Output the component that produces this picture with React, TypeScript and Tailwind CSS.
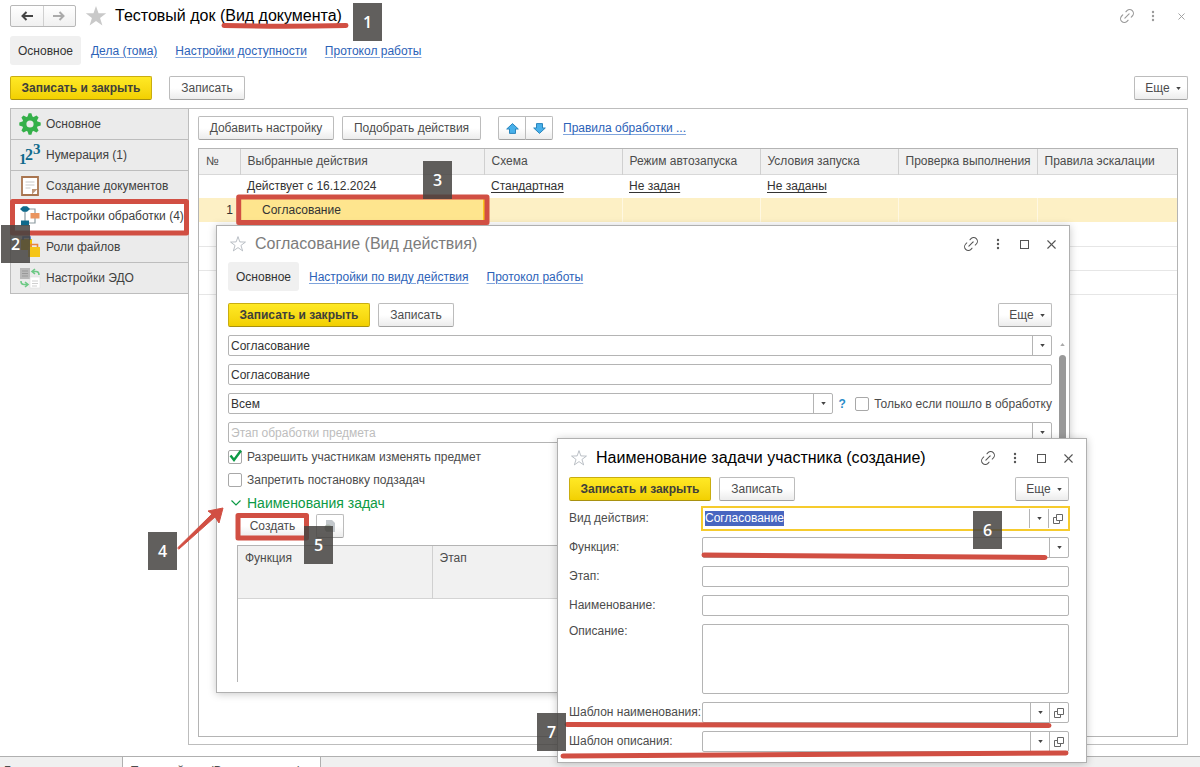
import { useEffect, useRef, type ReactNode } from 'react';
import { Link2, X } from 'lucide-react';
import clsx from 'clsx';

const columns = [
  { title: '№', width: 'w-[41px]' },
  { title: 'Выбранные действия', width: 'w-[244px]' },
  { title: 'Схема', width: 'w-[138px]' },
  { title: 'Режим автозапуска', width: 'w-[138px]' },
  { title: 'Условия запуска', width: 'w-[138px]' },
  { title: 'Проверка выполнения', width: 'w-[139px]' },
  { title: 'Правила эскалации', width: '' },
];

const badges = [
  { n: 1, place: 'left-[353px] top-[3px]' },
  { n: 2, place: 'left-[1px] top-[225px]' },
  { n: 3, place: 'left-[423px] top-[161px]' },
  { n: 4, place: 'left-[148px] top-[532px]' },
  { n: 5, place: 'left-[304px] top-[526px]' },
  { n: 6, place: 'left-[973px] top-[511px]' },
  { n: 7, place: 'left-[537px] top-[713px]' },
];

function Star({ filled, className }: { filled?: boolean; className?: string }) {
  return (
    <svg viewBox="0 0 20 20" className={className} fill={filled ? '#c9c9c9' : 'none'} stroke={filled ? 'none' : '#a9b0b8'}>
      <path d="M10 .8 12.3 7.4 19.3 7.6 13.7 11.8 15.8 18.6 10 14.5 4.2 18.6 6.3 11.8 .7 7.6 7.7 7.4Z" />
    </svg>
  );
}

function Arrow({ right }: { right?: boolean }) {
  return (
    <svg viewBox="0 0 12 10" className={clsx('h-[10px] w-3', right && 'rotate-180')} fill="none" stroke="currentColor" strokeWidth="2">
      <path d="M1 5h11M5.500 1 1.500 5l4 4" />
    </svg>
  );
}

function Dots() {
  return (
    <svg viewBox="0 0 4 12" className="h-3 w-1" fill="currentColor">
      <circle cx="2" cy="2" r="1.2" />
      <circle cx="2" cy="6" r="1.2" />
      <circle cx="2" cy="10" r="1.2" />
    </svg>
  );
}

function Caret() {
  return (
    <svg viewBox="0 0 6 4" className="h-[3px] w-[5px] shrink-0" fill="#444">
      <path d="M0 0h6L3 4Z" />
    </svg>
  );
}

function GearIcon() {
  return (
    <svg viewBox="0 0 22 22" className="size-[22px] shrink-0">
      <g fill="#35b04a">
        {[0, 45, 90, 135].map((a) => (
          <path key={a} d="M9.600 .3h2.800l1 3.200v15l-1 3.200H9.600l-1-3.200v-15Z" transform={`rotate(${a} 11 11)`} />
        ))}
        <circle cx="11" cy="11" r="7.8" />
      </g>
      <circle cx="11" cy="11" r="3.6" fill="#ebebeb" />
    </svg>
  );
}

function NumbersIcon() {
  return (
    <svg viewBox="0 0 22 22" className="size-[22px] shrink-0 overflow-visible font-['Liberation_Serif',serif] font-bold" fill="#0f6a8c">
      <text x="0" y="20" fontSize="15">1</text>
      <text x="6" y="16" fontSize="16">2</text>
      <text x="14" y="10" fontSize="15">3</text>
    </svg>
  );
}

function PageIcon() {
  return (
    <svg viewBox="0 0 22 22" className="size-[22px] shrink-0">
      <path d="M3 2h16v18H3Z" fill="#fff" stroke="#a9754f" strokeWidth="1.8" />
      <path d="M13 19.500V14h5.500Z" fill="#a9754f" opacity=".75" />
      <path d="M6.500 7h9M6.500 10h9M6.500 13h5" stroke="#c9c9c9" strokeWidth="1.2" />
    </svg>
  );
}

function SchemeIcon() {
  return (
    <svg viewBox="0 0 22 22" className="size-[22px] shrink-0">
      <path d="M6 6v11M6 4h10v5M16 13v5H8" fill="none" stroke="#8b9aa0" strokeWidth="1.200" />
      <path d="M1 4l3-2.800h4L11 4 8 6.800H4Z" fill="#0f6a8c" />
      <path d="M2 15.500h8v5H2Z" fill="#0f6a8c" />
      <path d="M11.500 8h9v5.500h-9Z" fill="#ea9560" />
    </svg>
  );
}

function FolderIcon() {
  return (
    <svg viewBox="0 0 22 22" className="size-[22px] shrink-0">
      <path d="M2 3h11v11H2Z" fill="#f2c200" />
      <path d="M4 4V1h7v3" fill="none" stroke="#3a64b4" strokeWidth="1.500" />
      <path d="M9 11h12v10H9Z" fill="#f5c518" />
      <path d="M12 11V8.500h6.500V11" fill="none" stroke="#e8853f" strokeWidth="1.600" />
    </svg>
  );
}

function ExchangeIcon() {
  return (
    <svg viewBox="0 0 22 22" className="size-[22px] shrink-0">
      <path d="M1 1h10v11H1Z" fill="#b9b9b9" />
      <path d="M3 4h6M3 6.500h6M3 9h6" stroke="#999" />
      <path d="M11 10h10v11H11Z" fill="#fff" stroke="#dedede" strokeWidth=".6" />
      <path d="M13 14h6M13 16.500h6M13 19h5" stroke="#cfcfcf" />
      <path d="M16 2l-3 2.500L16 7M13 4.500h4q3 0 3 3.500M6 20l3-2.500L6 15M9 17.500H5q-3 0-3-3.500" fill="none" stroke="#6dc985" strokeWidth="1.600" />
    </svg>
  );
}

function MoveIcon({ down }: { down?: boolean }) {
  return (
    <svg viewBox="0 0 13 11" className={clsx('h-[11px] w-[13px]', down && 'rotate-180')} fill="#48b0ea" stroke="#2b86bd">
      <path d="M6.500 .6 12.300 6H9.500v4.400h-6V6H.7Z" />
    </svg>
  );
}

const menu = [
  { label: 'Основное', icon: <GearIcon /> },
  { label: 'Нумерация (1)', icon: <NumbersIcon /> },
  { label: 'Создание документов', icon: <PageIcon /> },
  { label: 'Настройки обработки (4)', icon: <SchemeIcon />, active: true },
  { label: 'Роли файлов', icon: <FolderIcon /> },
  { label: 'Настройки ЭДО', icon: <ExchangeIcon /> },
];

function Button({ primary, className, children }: { primary?: boolean; className?: string; children: ReactNode }) {
  return (
    <button
      type="button"
      className={clsx(
        'flex h-6 shrink-0 items-center justify-center rounded-[2px] border whitespace-nowrap',
        primary
          ? 'border-[#c9ad10] border-b-[#a89110] bg-linear-to-b from-[#ffe924] to-[#f2d000] font-bold text-[#40403a]'
          : 'border-[#bcbcbc] border-b-[#a2a2a2] bg-linear-to-b from-white from-50% to-[#ececec] text-[#4c4c4c]',
        className,
      )}
    >
      {children}
    </button>
  );
}

function Commands({ gap }: { gap: string }) {
  return (
    <div className={clsx('flex', gap)}>
      <Button primary className="w-[142px]">Записать и закрыть</Button>
      <Button className="w-[76px]">Записать</Button>
      <Button className="ml-auto w-[54px] gap-[6px] pl-1">
        Еще
        <Caret />
      </Button>
    </div>
  );
}

function Link({ children }: { children: ReactNode }) {
  return (
    <a href="#" className="text-[#2c62b8] underline decoration-[#7fa4dc] underline-offset-2 whitespace-nowrap">
      {children}
    </a>
  );
}

function Tabs({ items }: { items: string[] }) {
  return (
    <nav className="flex h-[29px] items-center gap-[18px]">
      <a href="#" className="-mr-2 flex h-full items-center rounded-[3px] bg-[#f0f0f0] px-2 text-[#333]">Основное</a>
      {items.map((item) => (
        <Link key={item}>{item}</Link>
      ))}
    </nav>
  );
}

function WindowButtons() {
  return (
    <div className="ml-auto flex items-center text-[#555]">
      <button type="button" aria-label="Ссылка" className="flex w-[27px] justify-center">
        <Link2 className="size-[18px] -rotate-45" strokeWidth={1.4} />
      </button>
      <button type="button" aria-label="Действия" className="flex w-[27px] justify-center"><Dots /></button>
      <button type="button" aria-label="Развернуть" className="flex w-[27px] justify-center">
        <span className="size-[9px] border border-[#555]" />
      </button>
      <button type="button" aria-label="Закрыть" className="flex w-[27px] justify-center">
        <X className="size-[15px]" strokeWidth={1.8} />
      </button>
    </div>
  );
}

const box = 'h-[21px] rounded-[2px] border border-[#b4b4b4] bg-white';

function SelectField({ label, value, muted, id }: { label: string; value: string; muted?: boolean; id?: string }) {
  return (
    <div className={clsx(box, 'relative min-w-0 flex-1')}>
      <select
        id={id}
        aria-label={label}
        className={clsx('block h-full w-full appearance-none bg-transparent pl-[2px] outline-none', muted ? 'text-[#bdbdbd]' : 'text-[#333]')}
      >
        <option>{value}</option>
      </select>
      <span className="pointer-events-none absolute inset-y-0 right-0 flex w-[19px] items-center justify-center border-l border-[#b4b4b4]">
        <Caret />
      </span>
    </div>
  );
}

function OpenIcon() {
  return (
    <svg viewBox="0 0 10 10" className="size-[10px]" fill="none" stroke="#666">
      <path d="M3.500 .5h6v6h-6ZM3.500 3.500h-3v6h6v-3" />
    </svg>
  );
}

function LookupButtons() {
  return (
    <>
      <button type="button" aria-label="Выбрать" className="flex w-[19px] items-center justify-center border-l border-[#b4b4b4]"><Caret /></button>
      <button type="button" aria-label="Открыть" className="flex w-[19px] items-center justify-center border-l border-[#b4b4b4]"><OpenIcon /></button>
    </>
  );
}

function LookupField({ id }: { id: string }) {
  return (
    <div className={clsx(box, 'flex min-w-0 flex-1')}>
      <input id={id} className="min-w-0 flex-1 px-[2px] outline-none" />
      <LookupButtons />
    </div>
  );
}

function Check({ label, checked }: { label: string; checked?: boolean }) {
  return (
    <label className="flex h-[23px] items-center gap-[5px] whitespace-nowrap">
      <span className="relative size-[14px]">
        <input type="checkbox" defaultChecked={checked} className="peer block size-[14px] appearance-none rounded-[2px] border border-[#a8a8a8] bg-white" />
        <svg viewBox="0 0 14 14" className="pointer-events-none absolute inset-0 hidden overflow-visible peer-checked:block" fill="none" stroke="#0c9a45" strokeWidth="2.400">
          <path d="M2.500 5.500 6 10 13 .5" />
        </svg>
      </span>
      {label}
    </label>
  );
}

function ActionWindow() {
  return (
    <section className="absolute top-[225px] left-[216px] flex h-[468px] w-[854px] flex-col border border-[#b0b0b0] bg-white pl-[11px] shadow-[0_1px_8px_rgba(0,0,0,0.22)]">
      <header className="flex h-9 items-center pr-1">
        <Star className="ml-[2px] size-4" />
        <h2 className="ml-[9px] text-[16px] text-[#7c7c7c]">Согласование (Вид действия)</h2>
        <WindowButtons />
      </header>
      <div className="pr-[17px]">
        <Tabs items={['Настройки по виду действия', 'Протокол работы']} />
        <div className="mt-3">
          <Commands gap="gap-2" />
        </div>
      </div>
      <div className="mt-2 flex min-h-0 flex-1">
        <div className="flex min-w-0 flex-1 flex-col">
          <div className="flex flex-col gap-2">
            <div className="flex"><SelectField label="Вид действия" value="Согласование" /></div>
            <input aria-label="Наименование" defaultValue="Согласование" className={clsx(box, 'px-[2px] text-[#333] outline-none')} />
            <div className="flex items-center">
              <SelectField label="Кому" value="Всем" />
              <button type="button" className="w-[22px] pr-1 font-bold text-[#2a8cc8]">?</button>
              <div className="-my-px"><Check label="Только если пошло в обработку" /></div>
            </div>
            <div className="flex"><SelectField label="Этап" value="Этап обработки предмета" muted /></div>
          </div>
          <div className="mt-[2px]">
            <Check label="Разрешить участникам изменять предмет" checked />
            <Check label="Запретить постановку подзадач" />
          </div>
          <button type="button" className="ml-[3px] flex h-[23px] items-center gap-[6px] text-[14px] text-[#0c9a45]">
            <svg viewBox="0 0 10 6" className="h-[6px] w-[10px]" fill="none" stroke="currentColor" strokeWidth="1.200">
              <path d="M.5 .5 5 5 9.500 .5" />
            </svg>
            Наименования задач
          </button>
          <div className="ml-[9px] flex gap-2">
            <Button className="w-[71px]">Создать</Button>
            <Button className="w-7">
              <svg viewBox="0 0 12 14" className="h-[14px] w-3">
                <path d="M2 1h6l3 3v9H2Z" fill="#c3c8cc" />
                <circle cx="4" cy="9" r="3.500" fill="#a9b2a9" />
              </svg>
            </Button>
          </div>
          <div className="mt-[7px] mb-[10px] ml-[9px] flex-1 border-t border-l border-[#b4b4b4]">
            <table className="w-full table-fixed">
              <thead>
                <tr className="h-[52px] border-b border-[#d4d4d4] bg-[#f1f1f1] text-left align-top">
                  <th className="w-[194px] border-r border-[#d0d0d0] px-[7px] pt-1 font-normal">Функция</th>
                  <th className="px-[7px] pt-1 font-normal">Этап</th>
                </tr>
              </thead>
            </table>
          </div>
        </div>
        <div className="flex w-[17px] flex-col items-center pt-2 pl-[3px]">
          <svg viewBox="0 0 6 4" className="h-[3px] w-[5px]" fill="#aaa"><path d="M0 4h6L3 0Z" /></svg>
          <div className="mt-[9px] h-[200px] w-[7px] rounded-full bg-[#999]" />
        </div>
      </div>
    </section>
  );
}

function FormRow({ id, label, multiline, children }: { id: string; label: string; multiline?: boolean; children: ReactNode }) {
  return (
    <div className="flex">
      <label htmlFor={id} className={clsx('w-[133px] shrink-0 whitespace-nowrap', multiline ? 'leading-[14px]' : 'leading-[21px]')}>{label}</label>
      {children}
    </div>
  );
}

function TaskNameWindow() {
  const kindRef = useRef<HTMLInputElement>(null);

  useEffect(() => {
    kindRef.current?.focus();
    kindRef.current?.select();
  }, []);

  return (
    <section className="absolute top-[438px] left-[557px] w-[530px] border border-[#b0b0b0] bg-white pb-[10px] pl-[11px] shadow-[0_1px_8px_rgba(0,0,0,0.22)]">
      <header className="flex h-[38px] items-center pr-1">
        <Star className="ml-[2px] size-4" />
        <h2 className="ml-[9px] text-[16px] text-black">Наименование задачи участника (создание)</h2>
        <WindowButtons />
      </header>
      <div className="pr-[17px]">
        <Commands gap="gap-2" />
        <form className="mt-[7px] flex flex-col gap-2">
          <FormRow id="kind" label="Вид действия:">
            <div className="-my-[2px] -mr-px -ml-px flex h-[25px] min-w-0 flex-1 border-2 border-[#f6cb2d] p-px">
              <div className="flex min-w-0 flex-1 items-center">
                <input
                  id="kind"
                  ref={kindRef}
                  defaultValue="Согласование"
                  className="h-[15px] w-full px-px leading-[15px] text-[#333] outline-none selection:bg-[#4866c0] selection:text-white"
                />
              </div>
              <LookupButtons />
            </div>
          </FormRow>
          <FormRow id="func" label="Функция:"><SelectField id="func" label="Функция" value="" /></FormRow>
          <FormRow id="stage" label="Этап:"><input id="stage" className={clsx(box, 'min-w-0 flex-1 px-[2px]')} /></FormRow>
          <FormRow id="name" label="Наименование:"><input id="name" className={clsx(box, 'min-w-0 flex-1 px-[2px]')} /></FormRow>
          <FormRow id="descr" label="Описание:" multiline>
            <textarea id="descr" className="h-[70px] min-w-0 flex-1 resize-none rounded-[2px] border border-[#b4b4b4]" />
          </FormRow>
          <FormRow id="name-tpl" label="Шаблон наименования:"><LookupField id="name-tpl" /></FormRow>
          <FormRow id="descr-tpl" label="Шаблон описания:"><LookupField id="descr-tpl" /></FormRow>
        </form>
      </div>
    </section>
  );
}

// red pen strokes and numbered callouts on top of the windows
function Callouts() {
  return (
    <div className="pointer-events-none absolute inset-0">
      <svg className="absolute inset-0 h-full w-full" fill="none" stroke="#d14f43" strokeWidth="5" strokeLinecap="round" strokeLinejoin="round">
        <path d="M224 25.500Q285 27 346 25.500" />
        <rect x="12.500" y="201.500" width="174" height="31.500" />
        <rect x="238.700" y="197" width="248.300" height="25.500" />
        <rect x="238" y="515.500" width="68.500" height="22.500" />
        <path d="M704 555 1045 557.500" />
        <path d="M567 724.500 1049 725.500" />
        <path d="M563 756 1066 753" />
        <path d="M178 547.500 212 514 208 511 223 508 219 523 215 517 179 549Z" fill="#d14f43" strokeWidth="1" />
      </svg>
      {badges.map((b) => (
        <span
          key={b.n}
          className={clsx("absolute flex h-[38px] w-[29px] items-center justify-center bg-[#454341]/85 font-['Open_Sans',sans-serif] text-[16px] font-semibold text-white", b.place)}
        >
          {b.n}
        </span>
      ))}
    </div>
  );
}

export default function App() {
  return (
    <div className="relative flex h-screen flex-col overflow-hidden bg-white font-['Liberation_Sans',Arial,sans-serif] text-[12px] leading-4 text-[#4c4c4c]">
      <header className="flex h-8 shrink-0 items-center pr-[7px] pl-[10px]">
        <div className="flex h-[22px] w-[66px] rounded-[2px] border border-[#b8b8b8] bg-linear-to-b from-white to-[#f0f0f0]">
          <button type="button" aria-label="Назад" className="flex flex-1 items-center justify-center border-r border-[#d0d0d0] text-[#444]">
            <Arrow />
          </button>
          <button type="button" aria-label="Вперед" className="flex flex-1 items-center justify-center text-[#aaa]">
            <Arrow right />
          </button>
        </div>
        <Star filled className="ml-[9px] size-[22px]" />
        <h1 className="ml-2 text-[16px] text-black">Тестовый док (Вид документа)</h1>
        <div className="ml-auto flex items-center text-[#9a9a9a]">
          <button type="button" aria-label="Ссылка" className="flex w-7 justify-center"><Link2 className="size-[18px] -rotate-45" strokeWidth={1.5} /></button>
          <button type="button" aria-label="Действия" className="flex w-6 justify-center"><Dots /></button>
          <button type="button" aria-label="Закрыть" className="ml-1 flex w-6 justify-center"><X className="size-[11px]" strokeWidth={2} /></button>
        </div>
      </header>

      <div className="mt-1 pr-3 pl-[10px]">
        <Tabs items={['Дела (тома)', 'Настройки доступности', 'Протокол работы']} />
        <div className="mt-[11px]">
          <Commands gap="gap-[17px]" />
        </div>
      </div>

      <main className="mt-2 mb-[11px] flex min-h-0 flex-1 pr-3 pl-[10px]">
        <nav className="flex h-[186px] w-[178px] shrink-0 flex-col border-t border-l border-[#bdbdbd]">
          {menu.map((item) => (
            <a
              key={item.label}
              href="#"
              className={clsx('flex flex-1 items-center gap-[5px] border-b border-[#bdbdbd] pl-[8px] text-[#404040] whitespace-nowrap', item.active ? 'bg-white' : 'bg-[#ebebeb]')}
            >
              {item.icon}
              {item.label}
            </a>
          ))}
        </nav>

        <div className="flex min-w-0 flex-1 flex-col border border-[#bdbdbd] px-[9px] pt-[7px] pb-[7px]">
          <div className="flex items-center gap-2">
            <Button className="w-[136px]">Добавить настройку</Button>
            <Button className="w-[139px]">Подобрать действия</Button>
            <div className="ml-[9px] flex">
              <Button className="w-[28px] rounded-r-none"><MoveIcon /></Button>
              <Button className="-ml-px w-[28px] rounded-l-none"><MoveIcon down /></Button>
            </div>
            <span className="ml-[2px]"><Link>Правила обработки ...</Link></span>
          </div>

          <div className="mt-2 min-h-0 flex-1 border border-[#b4b4b4]">
            <table className="w-full table-fixed border-collapse">
              <thead>
                <tr className="h-[25px] border-b border-[#d8d8d8] bg-[#f1f1f1] text-left">
                  {columns.map((c) => (
                    <th key={c.title} className={clsx('border-r border-[#d0d0d0] px-[7px] font-normal whitespace-nowrap last:border-r-0', c.width)}>
                      {c.title}
                    </th>
                  ))}
                </tr>
              </thead>
              <tbody className="text-[#333]">
                <tr className="h-6">
                  <td />
                  <td className="px-[7px]">Действует с 16.12.2024</td>
                  <td className="px-[7px]"><a href="#" className="underline underline-offset-2">Стандартная</a></td>
                  <td className="px-[7px]"><a href="#" className="underline underline-offset-2">Не задан</a></td>
                  <td className="px-[7px]"><a href="#" className="underline underline-offset-2">Не заданы</a></td>
                  <td />
                  <td />
                </tr>
                <tr className="h-6 bg-[#fdf0c5]">
                  <td className="px-[7px] text-right">1</td>
                  <td className="border-r-2 border-[#fcc81e] bg-[#fee58e] pl-[22px]">Согласование</td>
                  <td className="border-r border-[#fff8e2]" />
                  <td className="border-r border-[#fff8e2]" />
                  <td className="border-r border-[#fff8e2]" />
                  <td className="border-r border-[#fff8e2]" />
                  <td />
                </tr>
                {[1, 2, 3].map((row) => (
                  <tr key={row} className="h-6 border-b border-[#e6e6e6]">
                    <td colSpan={7} />
                  </tr>
                ))}
              </tbody>
            </table>
          </div>
        </div>
      </main>

      {/* open windows strip, runs off the bottom edge */}
      <footer className="flex h-[11px] shrink-0 overflow-hidden border-t border-[#b0b0b0] bg-[#f0f0f0]">
        <a href="#" className="w-[123px] border-r border-[#b0b0b0] pt-[6px] pl-1 whitespace-nowrap">Главное</a>
        <a href="#" className="w-[198px] border-r border-[#b0b0b0] bg-white pt-[6px] pl-2 whitespace-nowrap">Тестовый док (Вид документа)</a>
      </footer>

      <ActionWindow />
      <TaskNameWindow />
      <Callouts />
    </div>
  );
}
